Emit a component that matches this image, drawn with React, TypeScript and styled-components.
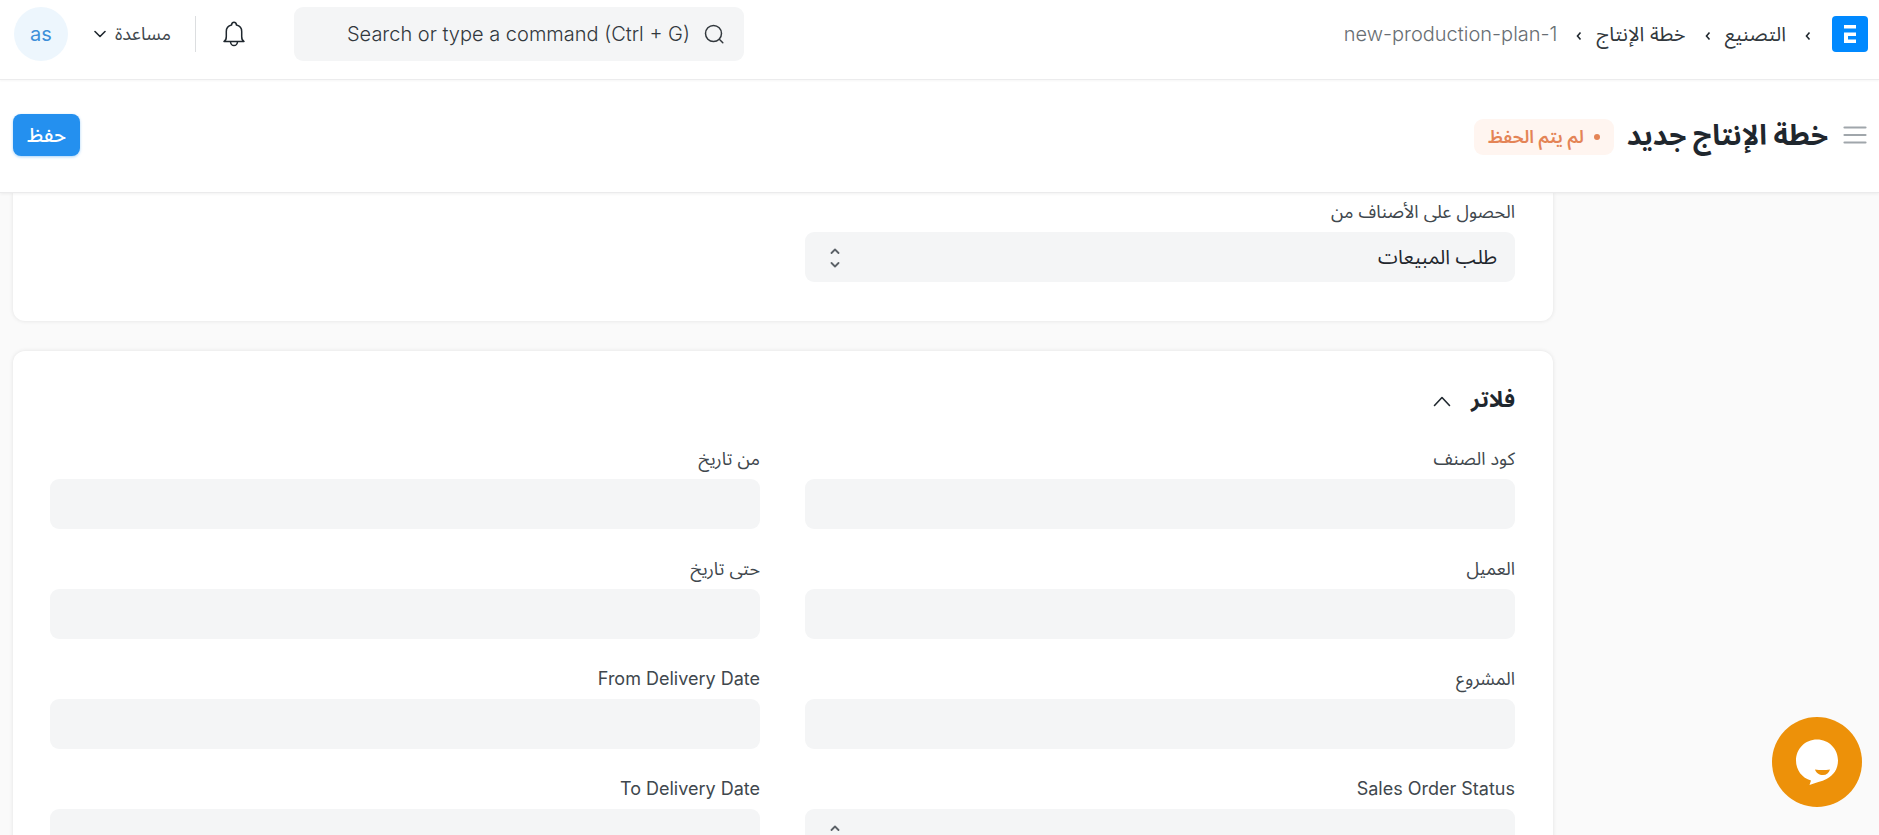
import React from "react";
import styled, { createGlobalStyle, css } from "styled-components";

const GlobalStyle = createGlobalStyle`
  *, *::before, *::after { box-sizing: border-box; }
  html, body { margin: 0; }
  body {
    background: #fafafa;
    color: #1f272e;
    font-family: Inter, "Noto Sans Arabic", "DejaVu Sans", sans-serif;
    font-size: 18px;
    -webkit-font-smoothing: antialiased;
  }
  button, input, select { font: inherit; color: inherit; }
  a { color: inherit; text-decoration: none; }
`;

const Page = styled.div`
  display: flex;
  flex-direction: column;
  height: 100vh;
  overflow: hidden;
`;

const Navbar = styled.header`
  position: relative;
  z-index: 2;
  flex: none;
  display: flex;
  align-items: flex-start;
  justify-content: space-between;
  height: 80px;
  padding: 7px 11px 0 14px;
  background: #fff;
  border-bottom: 1px solid #ececed;
  box-shadow: 0 1px 2px rgba(0, 0, 0, 0.04);
`;

const Breadcrumbs = styled.nav`
  display: flex;
  align-items: center;
  height: 54px;
`;

const Crumb = styled.a<{ $current?: boolean }>`
  font-size: 20px;
  line-height: 28px;
  white-space: nowrap;
  font-weight: ${(p) => (p.$current ? 300 : 400)};
  color: ${(p) => (p.$current ? "#686e73" : "#32383d")};
`;

const CrumbArrow = styled.svg`
  flex: none;
  width: 6px;
  height: 10px;
  margin: 4px 14px 0 19px;
`;

const Logo = styled.a`
  display: flex;
  margin-left: 7px;
`;

const NavTools = styled.div`
  display: flex;
  align-items: center;
  height: 54px;
`;

const SearchBox = styled.label`
  display: flex;
  align-items: center;
  gap: 14px;
  width: 450px;
  height: 54px;
  padding: 0 20px;
  border-radius: 9px;
  background: #f4f5f6;
`;

const SearchInput = styled.input`
  flex: 1;
  min-width: 0;
  padding: 0;
  border: 0;
  outline: 0;
  background: none;
  font-size: 20px;
  font-weight: 300;
  text-align: right;
  &::placeholder { color: #32383d; opacity: 1; }
`;

const PlainButton = styled.button`
  display: flex;
  align-items: center;
  padding: 0;
  border: 0;
  background: none;
  cursor: pointer;
`;

const BellButton = styled(PlainButton)`
  margin: 0 48px 0 26px;
`;

const Divider = styled.span`
  width: 1px;
  height: 36px;
  background: #dcdee0;
`;

const HelpButton = styled(PlainButton)`
  gap: 9px;
  margin: 0 24px 0 26px;
  font-size: 18px;
  color: #40474d;
`;

const Avatar = styled(PlainButton)`
  justify-content: center;
  width: 54px;
  height: 54px;
  border-radius: 50%;
  background: #edf6fd;
  color: #3d8fd9;
  font-size: 20px;
`;

const PageHead = styled.section`
  position: relative;
  z-index: 1;
  flex: none;
  display: flex;
  align-items: center;
  justify-content: space-between;
  height: 113px;
  padding: 0 12px 2px 13px;
  background: #fff;
  border-bottom: 1px solid #ebebec;
  box-shadow: 0 1px 3px rgba(0, 0, 0, 0.06);
`;

const TitleArea = styled.div`
  display: flex;
  align-items: center;
`;

const Title = styled.h1`
  margin: 0 15px 0 13px;
  font-size: 28px;
  line-height: 40px;
  font-weight: 700;
`;

const Indicator = styled.span`
  display: flex;
  align-items: center;
  gap: 10px;
  height: 36px;
  margin-top: 3px;
  padding: 0 14px;
  border-radius: 9px;
  background: #fff5f0;
  color: #e48456;
  font-size: 18px;
  font-weight: 600;
  &::before {
    content: "";
    width: 6px;
    height: 6px;
    border-radius: 50%;
    background: currentColor;
  }
`;

const SaveButton = styled.button`
  width: 67px;
  height: 42px;
  padding: 0;
  border: 0;
  border-radius: 8px;
  background: #2490ef;
  box-shadow: 0 1px 3px rgba(36, 144, 239, 0.4);
  color: #fff;
  font-size: 20px;
  line-height: 40px;
  font-weight: 500;
  cursor: pointer;
`;

const Body = styled.main`
  flex: 1;
  min-height: 0;
  overflow: hidden;
  display: grid;
  grid-template-columns: 313px minmax(0, 1fr);
  padding: 0 13px;
`;

const FormColumn = styled.form`
  grid-column: 2;
  display: flex;
  flex-direction: column;
  gap: 30px;
`;

const Card = styled.section<{ $continued?: boolean }>`
  flex: none;
  padding: 30px 38px 39px 37px;
  border-radius: 12px;
  background: #fff;
  box-shadow: 0 0 4px rgba(0, 0, 0, 0.1);
  ${(p) =>
    p.$continued &&
    css`
      padding-top: 5px;
      border-radius: 0 0 12px 12px;
    `}
`;

const SectionTitle = styled.h2`
  display: flex;
  margin: 0 0 28px;
  font-size: 22px;
  line-height: 36px;
  font-weight: 700;
`;

const SectionToggle = styled(PlainButton)`
  gap: 20px;
  svg { margin-top: 4px; }
`;

const FieldGrid = styled.div`
  display: grid;
  grid-template-columns: repeat(2, minmax(0, 1fr));
  gap: 26px 45px;
`;

const Field = styled.div`
  display: flex;
  flex-direction: column;
  gap: 6px;
`;

const FieldLabel = styled.label`
  font-size: 18px;
  line-height: 28px;
  color: #40474d;
`;

const control = css`
  display: block;
  width: 100%;
  height: 50px;
  padding: 0 18px;
  border: 0;
  border-radius: 9px;
  outline: 0;
  background: #f4f5f6;
  font-size: 20px;
`;

const TextInput = styled.input`
  ${control}
`;

const SelectWrap = styled.div`
  position: relative;
`;

const Select = styled.select`
  ${control}
  appearance: none;
`;

const SelectIcon = styled.svg`
  position: absolute;
  left: 25px;
  top: 16px;
  width: 10px;
  height: 20px;
  pointer-events: none;
`;

const ChatButton = styled.button`
  position: fixed;
  right: 17px;
  bottom: 28px;
  z-index: 3;
  width: 90px;
  height: 90px;
  padding: 0;
  border: 0;
  border-radius: 50%;
  background: #ed9109;
  cursor: pointer;
`;

const Arrow = () => (
  <CrumbArrow viewBox="0 0 6 10" fill="none" stroke="#1f272e" strokeWidth="1.6" aria-hidden="true">
    <path d="M4.5 1.5 1.5 5l3 3.5" />
  </CrumbArrow>
);

type FieldDef = { id: string; label: string; kind?: "select"; options?: string[] };

const FormField = ({ id, label, kind, options = [""] }: FieldDef) => (
  <Field>
    <FieldLabel htmlFor={id}>{label}</FieldLabel>
    {kind === "select" ? (
      <SelectWrap>
        <Select id={id}>
          {options.map((o) => (
            <option key={o}>{o}</option>
          ))}
        </Select>
        <SelectIcon viewBox="0 0 10 20" fill="none" stroke="#5c6268" strokeWidth="1.8" strokeLinecap="round" strokeLinejoin="round" aria-hidden="true">
          <path d="M1.5 5 5 1.5 8.5 5M1.5 15 5 18.5 8.5 15" />
        </SelectIcon>
      </SelectWrap>
    ) : (
      <TextInput id={id} type="text" />
    )}
  </Field>
);

const filters: FieldDef[] = [
  { id: "item_code", label: "كود الصنف" },
  { id: "from_date", label: "من تاريخ" },
  { id: "customer", label: "العميل" },
  { id: "to_date", label: "حتى تاريخ" },
  { id: "project", label: "المشروع" },
  { id: "from_delivery_date", label: "From Delivery Date" },
  { id: "sales_order_status", label: "Sales Order Status", kind: "select" },
  { id: "to_delivery_date", label: "To Delivery Date" },
];

export default function App() {
  return (
    <Page dir="rtl">
      <GlobalStyle />
      <Navbar>
        <Breadcrumbs>
          <Logo href="#home" aria-label="ERPNext">
            <svg width="36" height="36" viewBox="0 0 36 36" aria-hidden="true">
              <rect width="36" height="36" rx="4" fill="#0089ff" />
              <path fill="#fff" d="M12 9h12v3.5H12zM12 16.5h12V20h-8v3.5h8V27H12z" />
            </svg>
          </Logo>
          <Arrow />
          <Crumb href="#manufacturing">التصنيع</Crumb>
          <Arrow />
          <Crumb href="#production-plan">خطة الإنتاج</Crumb>
          <Arrow />
          <Crumb href="#new" $current>
            new-production-plan-1
          </Crumb>
        </Breadcrumbs>
        <NavTools>
          <SearchBox>
            <svg width="20" height="20" viewBox="0 0 20 20" fill="none" stroke="#32383d" strokeWidth="1.5" strokeLinecap="round" aria-hidden="true">
              <circle cx="9.5" cy="9.5" r="8" />
              <path d="m15.3 15.3 3.5 3.5" />
            </svg>
            <SearchInput dir="ltr" type="text" aria-label="Search" placeholder="Search or type a command (Ctrl + G)" />
          </SearchBox>
          <BellButton type="button" aria-label="Notifications">
            <svg width="24" height="26" viewBox="0 0 24 26" fill="none" stroke="#1f272e" strokeWidth="1.5" strokeLinejoin="round" strokeLinecap="round" aria-hidden="true">
              <path d="M2 20.5c1.8-.8 2.3-2.7 2.3-5v-5c0-3.7 2-5.800 5.200-6.500C9.800 2.300 10.700 1.300 12 1.300s2.200 1 2.500 2.700c3.200.7 5.200 2.800 5.200 6.500v5c0 2.300.5 4.200 2.300 5z" />
              <path d="M8.5 21c.3 2.300 1.600 3.500 3.500 3.500s3.200-1.200 3.500-3.500" />
            </svg>
          </BellButton>
          <Divider />
          <HelpButton type="button">
            مساعدة
            <svg width="12" height="8" viewBox="0 0 12 8" fill="none" stroke="#1f272e" strokeWidth="1.6" strokeLinecap="round" strokeLinejoin="round" aria-hidden="true">
              <path d="m1 1.5 5 5 5-5" />
            </svg>
          </HelpButton>
          <Avatar type="button">as</Avatar>
        </NavTools>
      </Navbar>

      <PageHead>
        <TitleArea>
          <PlainButton type="button" aria-label="Toggle sidebar">
            <svg width="24" height="20" viewBox="0 0 24 20" stroke="#a0a6ab" strokeWidth="2.2" strokeLinecap="round" aria-hidden="true">
              <path d="M1.5 2.5h21M1.5 10h21M1.5 17.5h21" />
            </svg>
          </PlainButton>
          <Title>خطة الإنتاج جديد</Title>
          <Indicator>لم يتم الحفظ</Indicator>
        </TitleArea>
        <SaveButton type="button">حفظ</SaveButton>
      </PageHead>

      <Body>
        <FormColumn>
          <Card $continued>
            <FieldGrid>
              <FormField id="get_items_from" label="الحصول على الأصناف من" kind="select" options={["طلب المبيعات"]} />
            </FieldGrid>
          </Card>
          <Card>
            <SectionTitle>
              <SectionToggle type="button" aria-expanded="true">
                فلاتر
                <svg width="18" height="11" viewBox="0 0 18 11" fill="none" stroke="#1f272e" strokeWidth="1.6" strokeLinecap="round" strokeLinejoin="round" aria-hidden="true">
                  <path d="m1.5 9.5 7.5-8 7.5 8" />
                </svg>
              </SectionToggle>
            </SectionTitle>
            <FieldGrid>
              {filters.map((f) => (
                <FormField key={f.id} {...f} />
              ))}
            </FieldGrid>
          </Card>
        </FormColumn>
      </Body>

      <ChatButton type="button" aria-label="Chat">
        <svg width="90" height="90" viewBox="0 0 90 90" aria-hidden="true">
          <path fill="#fff" d="M45 22.5c12 0 21 9.5 21 21 0 8.5-4.5 15-11.5 18.5-4.5 2.3-11.5 4-17 6l1.5-4.5C30 61 24 53 24 43.5c0-11.5 9-21 21-21z" />
          <path fill="#ed9109" d="M43 52.5c5 .8 10 .8 15 0-1 3.5-3.5 5.5-7 5.5-3.800 0-7-2-8-5.500z" />
        </svg>
      </ChatButton>
    </Page>
  );
}
